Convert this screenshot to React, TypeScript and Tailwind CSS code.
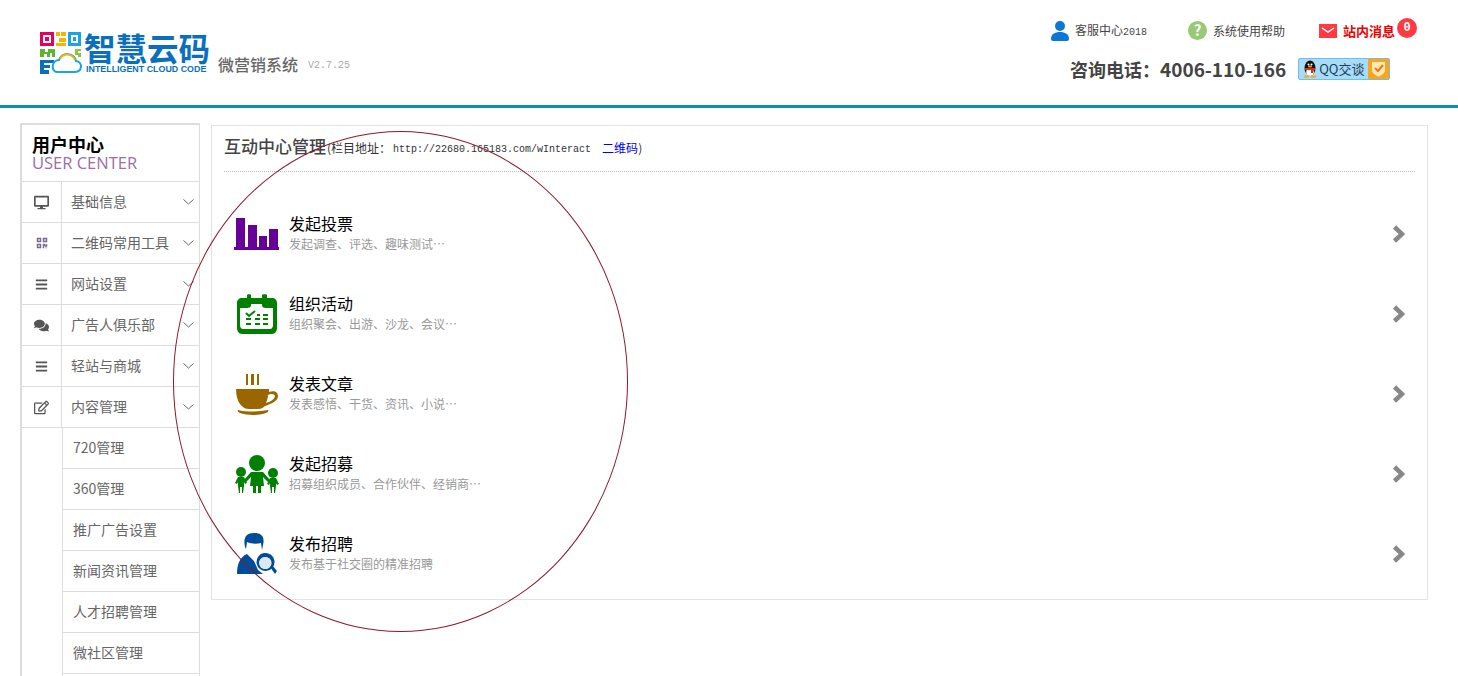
import { FaComments, FaDesktop, FaBars, FaQrcode, FaRegEdit } from 'react-icons/fa';

function ChevronDown() {
  return (
    <svg width="11" height="6" viewBox="0 0 11 6" className="shrink-0">
      <polyline points="0.5,0.5 5.5,5 10.5,0.5" fill="none" stroke="#666" strokeWidth="1" />
    </svg>
  );
}

function ChevronRight() {
  return (
    <svg width="13" height="18" viewBox="0 0 13 18" className="shrink-0">
      <polyline points="2.500,2 10,9 2.500,16" fill="none" stroke="#888" strokeWidth="4.500" />
    </svg>
  );
}

function LogoMark() {
  return (
    <svg width="43" height="42" viewBox="0 0 43 42" className="shrink-0">
      <rect x="0" y="0" width="14" height="14" fill="#e6005c" />
      <rect x="3" y="3" width="8" height="8" fill="#fff" />
      <rect x="5" y="5" width="4" height="4" fill="#e6005c" />
      <rect x="16" y="0" width="4" height="4" fill="#f9b200" />
      <rect x="21" y="0" width="5" height="4" fill="#f9b200" />
      <rect x="19" y="6" width="7" height="4" fill="#f9b200" />
      <rect x="16" y="11" width="10" height="3" fill="#f9b200" />
      <rect x="28" y="0" width="13" height="14" fill="#1ba3e8" />
      <rect x="31" y="3" width="7" height="8" fill="#fff" />
      <rect x="33" y="5" width="3" height="4" fill="#1ba3e8" />
      <path d="M0 17h5v3h3v-3h7v8h-3v-4h-2v4H7v-3H4v3H0z" fill="#5cb531" />
      <path d="M35 17h6v2h-3v2h3v4h-3v-2h-3z" fill="#8cc63f" />
      <path d="M0 28h14v3H4v2h6v3H4v2h5v4H0z" fill="#0b6fc0" />
      <path d="M17 40h17c9 0 9-10 2-11-2-9-15-9-17-1-7 0-9 11-2 12z" fill="#fff" stroke="#1ba3e8" strokeWidth="2" />
      <path d="M20 27c3-6 12-6 15 1" fill="none" stroke="#f9b200" strokeWidth="2" />
    </svg>
  );
}

function PersonIcon() {
  return (
    <svg width="18" height="20" viewBox="0 0 18 20">
      <circle cx="9" cy="5" r="5" fill="#0b78d8" />
      <path d="M0 18c0-5 4-7 9-7s9 2 9 7c0 1-1 2-2 2H2c-1 0-2-1-2-2z" fill="#0b78d8" />
    </svg>
  );
}

function MailIcon() {
  return (
    <svg width="18" height="14" viewBox="0 0 18 14">
      <rect width="18" height="14" fill="#ff3a42" />
      <polyline points="3,4 9,8 15,4" fill="none" stroke="#fff" strokeWidth="1.5" />
    </svg>
  );
}

function Penguin() {
  return (
    <svg width="16" height="18" viewBox="0 0 16 18" className="shrink-0">
      <ellipse cx="8" cy="8" rx="5.500" ry="7.500" fill="#111" />
      <ellipse cx="8" cy="12" rx="3.800" ry="3.800" fill="#fff" />
      <circle cx="6.500" cy="4.500" r="1" fill="#fff" />
      <circle cx="9.500" cy="4.500" r="1" fill="#fff" />
      <ellipse cx="8" cy="6.500" rx="2" ry="0.900" fill="#f7a81b" />
      <path d="M3 8h10v2H11v3H9v-3H3z" fill="#e4281c" />
      <ellipse cx="4.500" cy="16.500" rx="3" ry="1.300" fill="#f7a81b" />
      <ellipse cx="11.500" cy="16.500" rx="3" ry="1.300" fill="#f7a81b" />
    </svg>
  );
}

function VoteIcon() {
  return (
    <svg width="46" height="32" viewBox="0 0 46 32">
      <path d="M2 0h9v29H2zM14 7h9v22h-9zM25 18h8v11h-8zM35 11h9v18h-9zM0 29h45v3H0z" fill="#660099" />
    </svg>
  );
}

function CalendarIcon() {
  return (
    <svg width="40" height="40" viewBox="0 0 40 40">
      <path d="M5 4h5V1c0-1 4-1 4 0v3h11V1c0-1 5-1 5 0v3h5c3 0 5 2 5 5v25c0 3-2 6-5 6H5c-3 0-5-3-5-6V9c0-3 2-5 5-5z" fill="#008000" />
      <path d="M5 14h4c2 0 5 0 5-3v-1h11v1c0 3 3 3 5 3h6v17c0 2-1 4-3 4H6c-2 0-3-2-3-4V14z" fill="#fff" />
      <path d="M9 19l3 3 6-5" fill="none" stroke="#008000" strokeWidth="2" />
      <path d="M9 24h5v2H9zM18 24h5v2h-5zM26 24h5v2h-5zM9 29h5v2H9zM18 29h5v2h-5zM26 29h5v2h-5zM20 20h3v2h-3zM26 20h5v2h-5z" fill="#008000" />
    </svg>
  );
}

function CoffeeIcon() {
  return (
    <svg width="43" height="41" viewBox="0 0 43 41">
      <path d="M10 0h2v11h-2zM15 0h3v11h-3zM21 0h2v11h-2z" fill="#996600" />
      <path d="M0 15h33v3c5-2 9 0 9 4 0 5-7 8-13 10-2 2-4 3-7 3h-9C6 35 0 28 0 15zm32 6c0 3-1 5-2 8 4-1 9-4 9-7 0-2-4-3-7-1z" fill="#996600" fillRule="evenodd" />
      <path d="M2 36c8 2 21 2 30 0 2 2-4 5-15 5S0 38 2 36z" fill="#996600" />
    </svg>
  );
}

function FamilyIcon() {
  return (
    <svg width="44" height="38" viewBox="0 0 44 38">
      <g fill="#008000">
        <circle cx="22" cy="8" r="8" />
        <path d="M16 17h12l7 8-2 2-5-5 1 9h-3v7h-3v-7h-2v7h-3v-7h-3l1-9-5 5-2-2z" />
        <circle cx="6" cy="17" r="5" />
        <path d="M3 22h6l3 6-2 1-1-2v4l-1 7H7v-6H5v6H4l-1-7v-4l-1 2-2-1z" />
        <circle cx="38" cy="18" r="5" />
        <path d="M35 23h6l3 6-2 1-1-2v3l-1 7h-1v-6h-2v6h-1l-1-7v-3l-1 2-2-1z" />
      </g>
    </svg>
  );
}

function RecruitIcon() {
  return (
    <svg width="40" height="43" viewBox="0 0 40 43">
      <g fill="#004c99">
        <path d="M8 14C6 5 9 0 17 0s11 4 9 12l-1 5-1-7c-4 1-10 1-14-1l-1 7z" />
        <path d="M0 41c0-10 3-17 10-20l7 7 4 9 5 4z" />
        <path d="M21 24a9 9 0 1 1 2 12 9 9 0 0 1-2-12zm3 2a6 6 0 1 0 9 8 6 6 0 0 0-9-8z" fillRule="evenodd" />
        <path d="M33 34l2-2 5 6-2 3z" />
      </g>
      <circle cx="28" cy="30" r="6" fill="#dbe9f6" />
    </svg>
  );
}

const menus = [
  { icon: <FaDesktop size={15} color="#555" />, name: '基础信息' },
  { icon: <FaQrcode size={12} color="#7a6a90" />, name: '二维码常用工具' },
  { icon: <FaBars size={13} color="#555" />, name: '网站设置' },
  { icon: <FaComments size={15} color="#555" />, name: '广告人俱乐部' },
  { icon: <FaBars size={13} color="#555" />, name: '轻站与商城' },
  { icon: <FaRegEdit size={15} color="#555" />, name: '内容管理' },
];

const subMenus = ['720管理', '360管理', '推广广告设置', '新闻资讯管理', '人才招聘管理', '微社区管理', ''];

const actions = [
  { icon: <VoteIcon />, name: '发起投票', desc: '发起调查、评选、趣味测试…' },
  { icon: <CalendarIcon />, name: '组织活动', desc: '组织聚会、出游、沙龙、会议…' },
  { icon: <CoffeeIcon />, name: '发表文章', desc: '发表感悟、干货、资讯、小说…' },
  { icon: <FamilyIcon />, name: '发起招募', desc: '招募组织成员、合作伙伴、经销商…' },
  { icon: <RecruitIcon />, name: '发布招聘', desc: '发布基于社交圈的精准招聘' },
];

export default function App() {
  return (
    <div className="relative h-[676px] overflow-hidden bg-white font-['Noto_Sans_CJK_SC','Liberation_Sans',sans-serif]">
      <header className="flex h-[108px] justify-between border-b-[3px] border-[#0b8fb8]">
        <div className="flex items-start pl-[40px] pt-[32px]">
          <LogoMark />
          <div className="flex flex-col">
            <div className="h-[30px] pl-[1px] text-[31.5px] font-bold leading-[30px] text-[#0b6fc0]">智慧云码</div>
            <div className="mt-[1px] whitespace-nowrap pl-[3px] font-['Liberation_Sans',sans-serif] text-[8.9px] font-bold leading-[12px] text-[#0b6fc0]">INTELLIGENT CLOUD CODE</div>
          </div>
          <div className="ml-[8px] mt-[22px] text-[16px] font-medium leading-[20px] text-[#666]">微营销系统</div>
          <div className="ml-[10px] mt-[27px] font-['Liberation_Mono',monospace] text-[10px] leading-[14px] text-[#aaa]">V2.7.25</div>
        </div>
        <div className="w-[407px] pt-[18px]">
          <div className="flex h-[25px] items-center text-[12px] text-[#444]">
            <PersonIcon />
            <span className="ml-[6px] w-[72px] whitespace-nowrap">客服中心<span className="font-['Liberation_Mono',monospace] text-[10px]">2018</span></span>
            <span className="ml-[41px] flex h-[19px] w-[19px] items-center justify-center rounded-full bg-[#98c974] text-[15px] font-bold text-white">?</span>
            <span className="ml-[6px] w-[72px] whitespace-nowrap">系统使用帮助</span>
            <span className="ml-[34px]"><MailIcon /></span>
            <span className="ml-[6px] whitespace-nowrap text-[13px] font-bold text-[#f00000]">站内消息</span>
            <span className="mb-[6px] ml-[2px] flex h-[20px] w-[20px] items-center justify-center rounded-full bg-[#ff3a42] font-['Liberation_Mono',monospace] text-[12px] font-bold text-white">0</span>
          </div>
          <div className="mt-[15px] flex h-[22px] items-center pl-[19px]">
            <span className="whitespace-nowrap text-[18px] font-bold text-[#444]">咨询电话：<span className="text-[19px]">4006-110-166</span></span>
            <span className="ml-[12px] flex h-[22px] w-[92px] overflow-hidden rounded-[2px] border border-[#6fbfe8] bg-[#a6dcf7]">
              <span className="flex w-[69px] items-center gap-[1px] whitespace-nowrap pl-[3px] text-[13px] text-[#1c3c55]"><Penguin />QQ交谈</span>
              <span className="flex flex-1 items-center justify-center bg-[#f9a51e]">
                <svg width="15" height="16" viewBox="0 0 15 16">
                  <path d="M1 1h13v8c0 3-3 5-6.500 6.500C4 14 1 12 1 9z" fill="#ffe9b0" />
                  <path d="M4 7l3 3 5-6" fill="none" stroke="#e8791a" strokeWidth="2" />
                </svg>
              </span>
            </span>
          </div>
        </div>
      </header>

      <div className="flex items-start pl-[20px] pt-[15px]">
        <aside className="w-[180px] shrink-0 border-l-2 border-r border-t-2 border-[#ddd]">
          <div className="flex h-[57px] flex-col justify-center border-b border-[#ddd] pl-[10px]">
            <div className="h-[19px] text-[18px] font-bold leading-[19px] text-black">用户中心</div>
            <div className="font-['Open_Sans',sans-serif] text-[16.5px] leading-[18px] text-[#9b6fa6]">USER CENTER</div>
          </div>
          {menus.map((m) => (
            <div key={m.name} className="flex h-[41px] items-center border-b border-[#ddd]">
              <div className="flex h-full w-[40px] shrink-0 items-center justify-center border-r border-[#ddd]">{m.icon}</div>
              <div className="min-w-0 flex-1 whitespace-nowrap pb-[2px] pl-[9px] text-[14px] text-[#666]">{m.name}</div>
              <span className="mr-[5px]"><ChevronDown /></span>
            </div>
          ))}
          <div className="ml-[40px] border-l border-[#ddd]">
            {subMenus.map((s) => (
              <div key={s} className="flex h-[41px] items-center border-b border-[#ddd] pb-[2px] pl-[10px] text-[14px] text-[#666]">{s}</div>
            ))}
          </div>
        </aside>

        <main className="ml-[11px] mt-[2px] h-[475px] w-[1217px] shrink-0 border border-[#e3e3e3] px-[12px]">
          <div className="flex h-[46px] items-center border-b border-dotted border-[#bbb] text-[12px] text-[#333]">
            <span className="mb-[6px] text-[17px] font-medium leading-[20px] text-[#444]">互动中心管理</span>
            <span className="ml-[1px] mb-[1px]">(栏目地址：</span>
            <span className="ml-[2px] font-['Liberation_Mono',monospace] text-[10px] mt-[1px]">http://22680.165183.com/wInteract</span>
            <span className="ml-[11px] mb-[1px] text-[#0000ee]">二维码</span>
            <span className="mb-[1px]">)</span>
          </div>
          <div className="pt-[22px]">
            {actions.map((a) => (
              <div key={a.name} className="flex h-[80px] items-center pl-[10px] pr-[10px]">
                <div className="flex h-[44px] w-[46px] shrink-0 items-center justify-center">{a.icon}</div>
                <div className="ml-[9px] flex-1">
                  <div className="h-[20px] text-[16px] leading-[18px] text-black">{a.name}</div>
                  <div className="text-[12px] leading-[20px] text-[#999]">{a.desc}</div>
                </div>
                <ChevronRight />
              </div>
            ))}
          </div>
        </main>
      </div>

      <div className="absolute left-[173px] top-[131px] h-[501px] w-[455px] rounded-[50%] border border-[#8b1a2b]" />
    </div>
  );
}
